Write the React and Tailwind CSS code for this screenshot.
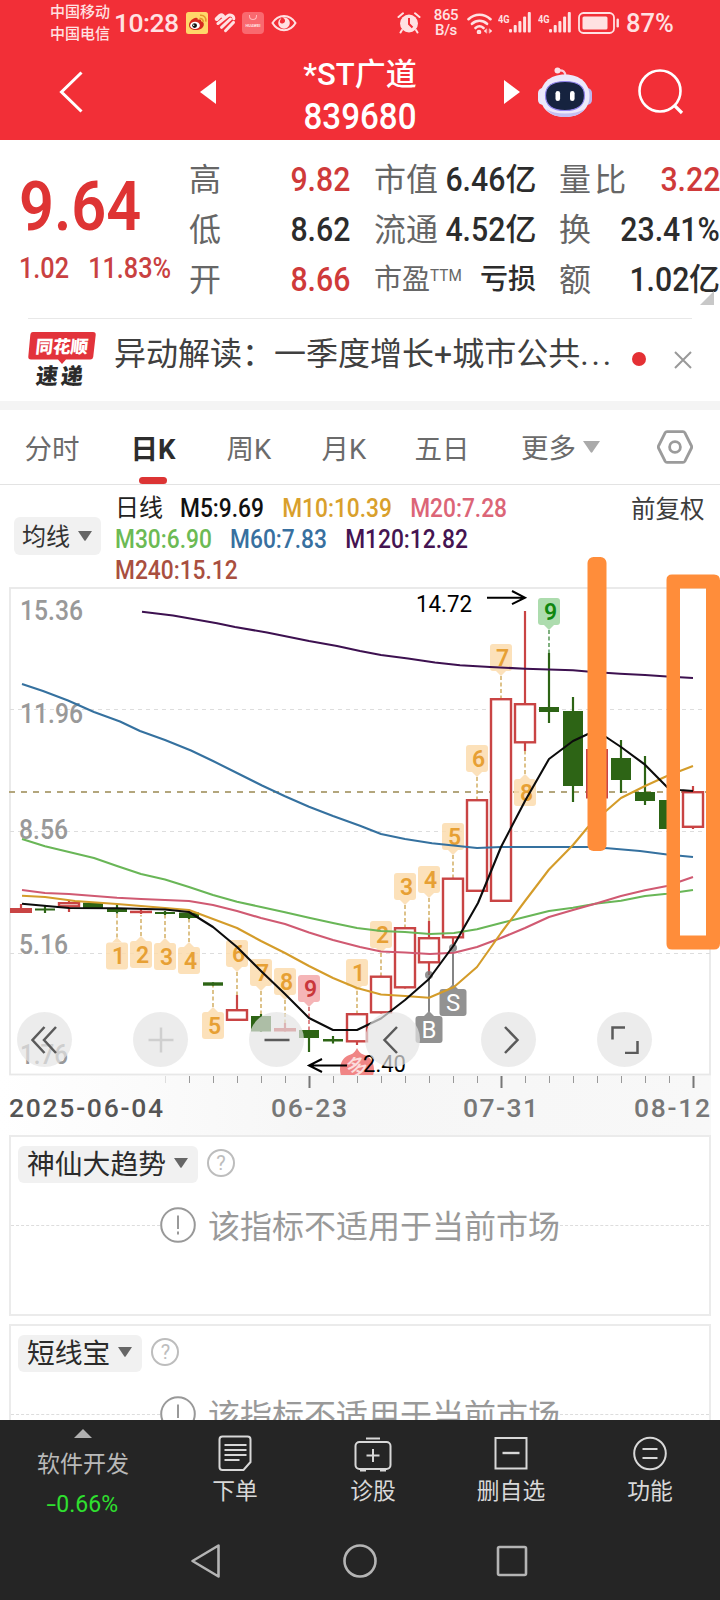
import clsx from "clsx";

const START_X = 21;
const STEP = 24;
const cx = (i) => START_X + STEP * i;

// index, kind (up / down / solid), body top, body bottom, wick top, wick bottom
const candles = [
  [0, "solid", 908, 913, 904, 913],
  [1, "down", 908.5, 910.5, 906, 913],
  [2, "up", 902, 907.5, 901, 912],
  [3, "down", 902.7, 908, 902.7, 908],
  [4, "down", 908, 912, 905, 913.5],
  [5, "solid", 910.7, 913.2, 909, 914],
  [6, "down", 912, 914, 911, 915],
  [7, "down", 912.5, 918, 912.5, 919],
  [8, "down", 982.3, 985.7, 982.3, 985.7],
  [9, "up", 1009, 1021, 995, 1021],
  [10, "down", 1016, 1031.5, 1014, 1032],
  [11, "solid", 1028, 1031.5, 1023, 1031.5],
  [12, "down", 1030, 1038, 1030, 1052],
  [13, "down", 1039, 1041.5, 1036, 1043.5],
  [14, "up", 1013, 1042.5, 1013, 1045],
  [15, "up", 975.5, 1013.5, 975.5, 1013.5],
  [16, "up", 927, 988.5, 927, 988.5],
  [17, "up", 937, 963.5, 921, 975],
  [18, "up", 877.5, 938.5, 877.5, 946],
  [19, "up", 799, 892, 799, 892],
  [20, "up", 698, 902, 698, 902],
  [21, "up", 703, 743.5, 611, 751],
  [22, "down", 707, 712, 653, 723],
  [23, "down", 711, 786, 697, 802],
  [24, "solid", 749, 798.5, 749, 798.5],
  [25, "down", 758, 780, 740, 793],
  [26, "down", 792, 801, 756, 805],
  [27, "down", 800, 829, 800, 829],
  [28, "up", 791, 828, 786, 829],
];

const averages = [
  {
    color: "#3d1150",
    points:
      "142,611.7 173,615.5 217,623.3 235,627 267,632.5 309,641 337,646 360,651 381,655 408,658.5 435,662.5 460,665.3 490,667 525,668.7 573,670.3 590,671.7 620,673.7 645,675 667,676.5 693,678",
  },
  {
    color: "#35719f",
    points:
      "22,684 43,691 68,700.5 94,712 120,721.5 140,731 165,740 191,750.5 213,761 237,773 262,785.5 285,796.3 309,806.7 333,816 360,825.7 381,834 405,839 432,843.3 477,848 501,847 588,847 608,848.3 640,851 667,854.5 693,857",
  },
  {
    color: "#69b657",
    points:
      "22,839 45,846.3 69,852 94,858 117,866 141,874 165,879.5 189,887 213,895 237,901.7 261,907 285,912.3 309,917.7 333,923 357,928 381,931 405,932 430,934 454,933 477,929.3 501,923 525,917 549,911 573,907.7 597,903.5 621,900.7 645,896 667,893.7 693,890",
  },
  {
    color: "#d05a72",
    points:
      "22,890 45,893 69,894 117,897.7 141,899 189,901 213,905 237,911 261,918 285,924 309,932.5 333,940 360,947 381,951.5 405,952.5 430,954 454,952.7 477,947 501,938 525,928 549,917 573,910 597,903.3 621,896 645,890.3 667,886 693,877",
  },
  {
    color: "#d49c2a",
    points:
      "22,895.7 45,897 75,901 117,904 165,908 189,910 213,919 237,928 261,941 285,953 309,966 333,978 357,988 381,994.5 405,996 429,997.7 454,987 477,967 501,933 525,901 549,869.5 573,845 588,827 606,811 621,798 645,786 667,776 693,766",
  },
  {
    color: "#0c0c0c",
    points:
      "22,903.7 69,908 117,908.3 165,909.5 189,912 213,927 237,947 261,971 285,994 309,1018 333,1030 357,1030 381,1018.5 405,1000 429,979 454,945 478,903 501,847 525,801 549,759 573,741 588,734 606,737 621,747 645,764.7 667,787 680,790 693,791",
  },
];

// badges sitting above a candle point down, the ones below point up
const badges = [
  { i: 4, n: 1, top: 942.5, below: true, to: 914 },
  { i: 5, n: 2, top: 941, below: true, to: 915 },
  { i: 6, n: 3, top: 943, below: true, to: 915 },
  { i: 7, n: 4, top: 947, below: true, to: 919 },
  { i: 8, n: 5, top: 1012, below: true, to: 986 },
  { i: 9, n: 6, top: 940, to: 995 },
  { i: 10, n: 7, top: 959, to: 1014 },
  { i: 11, n: 8, top: 968, to: 1023 },
  { i: 12, n: 9, top: 975, to: 1030, tone: "red" },
  { i: 14, n: 1, top: 959, to: 1013 },
  { i: 15, n: 2, top: 921, to: 975 },
  { i: 16, n: 3, top: 873, to: 927 },
  { i: 17, n: 4, top: 866, to: 921 },
  { i: 18, n: 5, top: 823, to: 877 },
  { i: 19, n: 6, top: 745, to: 799 },
  { i: 20, n: 7, top: 644, to: 698 },
  { i: 21, n: 8, top: 779, below: true, to: 751 },
  { i: 22, n: 9, top: 598, to: 653, tone: "green" },
];

const tones = {
  gold: { box: "#fcdcae", text: "#e7a034", line: "#c79a3c" },
  red: { box: "#f4a9ab", text: "#c9373b", line: "#c9373b" },
  green: { box: "#9fd6a0", text: "#0f870f", line: "#2b7d2b" },
};

const tabs = [
  { label: "分时", cls: "w-[54px]" },
  { label: "日K", cls: "w-[46px] ml-[51px]", active: true },
  { label: "周K", cls: "w-[46px] ml-[50px]" },
  { label: "月K", cls: "w-[46px] ml-[49px]" },
  { label: "五日", cls: "w-[54px] ml-[48px]" },
];

function Caret({ className }) {
  return (
    <svg viewBox="0 0 14 10" className={className}>
      <path d="M0 0h14L7.8 9.2q-.8 1-1.6 0z" fill="currentColor" />
    </svg>
  );
}

function Signal() {
  return (
    <div className="flex w-[33px] items-start">
      <span className="mt-px w-[11px] origin-left scale-x-[0.8] text-[11.5px] leading-3 font-bold">
        4G
      </span>
      <svg viewBox="0 0 22 22" className="h-[22px] w-[22px]" fill="currentColor">
        <rect x="0" y="17" width="3" height="3.5" rx="1" />
        <rect x="4.7" y="13" width="3" height="7.5" rx="1" />
        <rect x="9.4" y="9" width="3" height="11.5" rx="1" />
        <rect x="14.1" y="4.5" width="3" height="16" rx="1" />
        <rect x="18.8" y="0" width="3" height="20.5" rx="1" />
      </svg>
    </div>
  );
}

function StatusBar() {
  return (
    <div className="flex h-[46px] items-center text-[#ffe1e2]">
      <div className="ml-[50px] w-[60px] text-[15px] leading-[22px] font-medium">
        <div>中国移动</div>
        <div>中国电信</div>
      </div>
      <div className="ml-1 w-[68px] text-[26.5px] leading-none font-medium tracking-[-0.02em]">
        10:28
      </div>
      <svg viewBox="0 0 22 22" className="ml-1 h-[22px] w-[22px]">
        <rect width="22" height="22" rx="2.5" fill="#ffd76a" />
        <path
          d="M3 13c0-3.500 4-7 7-7.200 1.500-.1 2 .8 1.700 2 2-.8 3.800-.5 3.400 1.500 1.800.5 3 1.800 2.700 3.600-.4 3-4 5.100-8 5.100S3 16.500 3 13z"
          fill="#d6281f"
        />
        <ellipse cx="9" cy="13.400" rx="4.800" ry="3.600" fill="#fff" />
        <circle cx="8.600" cy="13.600" r="2.400" fill="#111" />
        <circle cx="7.700" cy="13.200" r=".7" fill="#fff" />
        <path
          d="M13.500 6.500c2.500-.3 4 1.400 3.600 3.600M14 3.300c4-.5 6.500 2.500 5.800 6.300"
          fill="none"
          stroke="#e6962c"
          strokeWidth="1.500"
        />
      </svg>
      <svg
        viewBox="0 0 22 20"
        className="ml-[6px] h-[20px] w-[22px]"
        fill="none"
        stroke="currentColor"
        strokeWidth="3"
        strokeLinecap="round"
      >
        <path d="M2.800 6 6 2.800q1.500-1 3 .4" strokeWidth="4" />
        <path d="M4 10.500 13.500 3c2.600-2 6.300-.4 6.300 2.800" />
        <path d="m7.500 14.300 9-8.300" />
        <path d="m11.500 17.700 8-8.300" />
      </svg>
      <div className="ml-[6px] flex h-[22px] w-[22px] flex-col items-center justify-between rounded bg-[#f9696f] pt-[3px] pb-[6px]">
        <span className="h-[5px] w-[8px] rounded-b-full border border-t-0 border-[#ffb9bb]" />
        <span className="text-[4px] leading-none font-bold">HUAWEI</span>
      </div>
      <svg viewBox="0 0 26 18" className="ml-[7px] h-[18px] w-[26px]">
        <path
          d="M1.500 9C7 -.5 19 -.5 24.500 9 19 18.500 7 18.500 1.500 9z"
          fill="none"
          stroke="currentColor"
          strokeWidth="2"
        />
        <circle cx="13" cy="9" r="5.800" fill="currentColor" />
        <path d="M10.500 3.500c4 .5 5 5 1 6-2 .4-2.800-1-2.600-2.500z" fill="#f22f37" />
      </svg>

      <svg viewBox="0 0 24 22" className="ml-[100px] h-[22px] w-[24px]">
        <circle cx="12" cy="11.500" r="9" fill="currentColor" />
        <path
          d="M1.500 5 6 1.300M22.500 5 18 1.300M5 18l-1.500 2.500M19 18l1.500 2.500"
          stroke="currentColor"
          strokeWidth="2"
          strokeLinecap="round"
        />
        <path d="M12 6v6l3.500 3.500" fill="none" stroke="#f22f37" strokeWidth="2" />
      </svg>
      <div className="ml-[11px] w-[28px] text-center text-[15px] leading-[15px] font-medium tracking-tight">
        <div>865</div>
        <div>B/s</div>
      </div>
      <svg
        viewBox="0 0 26 21"
        className="ml-[7px] h-[21px] w-[26px]"
        fill="none"
        stroke="currentColor"
        strokeWidth="2.600"
        strokeLinecap="round"
      >
        <path d="M1.500 6.200c6.500-6 15.500-6 22 0M5 10.800c4.500-4 10.500-4 15 0M8.500 15c2.500-2.200 5.500-2.200 8 0" />
        <circle cx="12" cy="19" r="1" />
        <path d="m19.500 16-2.500 2 2.500 2zM22.500 16l2.500 2-2.500 2z" fill="currentColor" strokeWidth=".5" />
      </svg>
      <div className="ml-[5px] flex gap-[7px]">
        <Signal />
        <Signal />
      </div>
      <svg viewBox="0 0 42 22" className="ml-[7px] h-[22px] w-[42px]">
        <rect x="1" y="1" width="35" height="20" rx="4.500" fill="none" stroke="currentColor" strokeWidth="1.800" />
        <rect x="4.500" y="4.500" width="25" height="13" rx="1.500" fill="currentColor" />
        <rect x="38.500" y="6.500" width="2.400" height="9" rx="1.200" fill="currentColor" />
      </svg>
      <div className="ml-[6px] pt-[2px] text-[25.5px] leading-none font-medium">
        87%
      </div>
    </div>
  );
}

function Robot() {
  return (
    <svg viewBox="0 0 54 50" className="ml-[18px] h-[50px] w-[54px]">
      <path d="M20 3.500c5-.8 7.500 1 7.500 6" fill="none" stroke="#f9cfdc" strokeWidth="2.200" />
      <circle cx="19.500" cy="3.500" r="3" fill="#fbe0e8" />
      <rect x="0" y="21" width="10" height="17" rx="5" fill="#e9e6fb" />
      <rect x="44" y="21" width="10" height="17" rx="5" fill="#bdb6ee" />
      <path d="M27 7.500C43 7.500 51.500 17 51.500 29S43 50 27 50 2.500 41 2.500 29 11 7.500 27 7.500z" fill="#ece9fb" />
      <path d="M8 42c5 6 11 8 19 8s15-2 20-8c-6 3-12 4.500-20 4.500S13 45 8 42z" fill="#c4bff3" />
      <path
        d="M27 14.500c12 0 19.500 4 19.500 14S39 43.500 27 43.500 7.500 39 7.500 28.500s7.500-14 19.500-14z"
        fill="#16233f"
        stroke="#9184ee"
        strokeWidth="1.200"
      />
      <rect x="17.500" y="24" width="4.600" height="10" rx="2.300" fill="#fff" />
      <rect x="32" y="24" width="4.600" height="10" rx="2.300" fill="#fff" />
    </svg>
  );
}

function Header() {
  return (
    <div className="h-[140px] bg-[#f22f37] text-white">
      <StatusBar />
      <div className="flex h-[92px] items-center">
        <svg viewBox="0 0 24 42" className="ml-[59px] h-[42px] w-[24px]">
          <path d="M22.500 1.500 2.500 21l20 19.500" fill="none" stroke="currentColor" strokeWidth="3" />
        </svg>
        <svg viewBox="0 0 16 24" className="ml-[117px] h-[24px] w-[16px]">
          <path d="M16 0v24L0 12z" fill="currentColor" />
        </svg>
        <div className="w-[288px] text-center font-medium">
          <div className="mt-[9px] text-[31px] leading-[38px]">*ST广道</div>
          <div className="mt-[2px] scale-x-[0.92] text-[36px] leading-[42px]">839680</div>
        </div>
        <svg viewBox="0 0 16 24" className="h-[24px] w-[16px]">
          <path d="M0 0v24l16-12z" fill="currentColor" />
        </svg>
        <Robot />
        <svg
          viewBox="0 0 46 46"
          className="ml-[46px] h-[46px] w-[46px]"
          fill="none"
          stroke="currentColor"
          strokeWidth="2.600"
        >
          <circle cx="22" cy="22" r="20.500" />
          <path d="m36 36 8 8" strokeWidth="3.200" />
        </svg>
      </div>
    </div>
  );
}

function Stat({ label, value, red, small, sup, spaced }) {
  return (
    <div className="flex h-[50px] items-center justify-between whitespace-nowrap">
      <span
        className={clsx(
          "flex items-start pt-[2px] text-[#666]",
          small ? "text-[28px]" : "text-[32px]",
          spaced && "tracking-[0.1em]"
        )}
      >
        {label}
        {sup && (
          <sup className="top-0 mt-[8px] w-[28px] origin-left scale-x-[0.9] text-[17px] leading-none">
            {sup}
          </sup>
        )}
      </span>
      <span
        className={clsx(
          "flex items-center font-medium",
          red ? "text-[#cf3a3a]" : "text-[#2c2c2c]"
        )}
      >
        {value.map((part) => (
          <span
            key={part}
            className={clsx(
              /\d/.test(part)
                ? "origin-right scale-x-[0.89] pt-[1px] text-[34px]"
                : small
                  ? "pt-[2px] text-[28px]"
                  : "pt-[2px] text-[31px]"
            )}
          >
            {part}
          </span>
        ))}
      </span>
    </div>
  );
}

function Quote() {
  return (
    <div className="relative flex h-[178px] pt-[14px]">
      <div className="w-[169px] pl-[19px] text-[#de3434]">
        <div className="mt-[13px] origin-left scale-x-[0.9] text-[68px] leading-[80px] font-semibold">
          9.64
        </div>
        <div className="mt-[1px] flex origin-left scale-x-[0.87] gap-[22px] text-[29px] leading-[40px] font-medium text-[#c94141]">
          <span>1.02</span>
          <span>11.83%</span>
        </div>
      </div>
      <div className="ml-[20px] w-[161px]">
        <Stat label="高" value={["9.82"]} red />
        <Stat label="低" value={["8.62"]} />
        <Stat label="开" value={["8.66"]} red />
      </div>
      <div className="ml-[24px] w-[162px]">
        <Stat label="市值" value={["6.46", "亿"]} />
        <Stat label="流通" value={["4.52", "亿"]} />
        <Stat label="市盈" sup="TTM" value={["亏损"]} small />
      </div>
      <div className="ml-[23px] w-[161px]">
        <Stat label="量比" value={["3.22"]} red spaced />
        <Stat label="换" value={["23.41%"]} />
        <Stat label="额" value={["1.02", "亿"]} />
      </div>
      <svg viewBox="0 0 14 14" className="absolute right-[6px] bottom-[13px] h-[14px] w-[14px]">
        <path d="M14 0v14H0z" fill="#c8c8c8" />
      </svg>
    </div>
  );
}

function News() {
  return (
    <div className="mx-[28px] flex h-[83px] border-t border-[#e8e8e8]">
      <div className="relative mt-[13px] h-[56px] w-[68px]">
        <svg viewBox="0 0 68 32" className="absolute top-0 left-0 h-[32px] w-[68px]">
          <path d="M5 0h60q3 0 2.700 3l-2.500 22q-.4 2.500-3 2.500H38L34 32l-4-4.500H3q-3 0-2.700-3l2-21.500Q2.600 0 5 0z" fill="#e2333b" />
        </svg>
        <div className="relative -skew-x-6 pt-[4px] text-center text-[17.500px] leading-[22px] font-black text-white">
          同花顺
        </div>
        <div className="relative mt-[6px] -skew-x-6 pl-[8px] text-[22px] leading-[26px] font-black tracking-[0.14em] text-[#2b2b2b]">
          速递
        </div>
      </div>
      <div className="ml-[18px] flex w-[501px] pt-[2px] text-[32px] leading-[66px] whitespace-nowrap text-[#404040]">
        <span>异动解读：一季度增长+城市公共</span>
        <span className="tracking-[0.09em]">...</span>
      </div>
      <span className="mt-[33px] ml-[17px] h-[14px] w-[14px] rounded-full bg-[#e43034]" />
      <svg viewBox="0 0 18 18" className="mt-[32px] ml-[28px] h-[18px] w-[18px]">
        <path d="m1 1 16 16M17 1 1 17" stroke="#999" strokeWidth="2" />
      </svg>
    </div>
  );
}

function Tabs() {
  return (
    <div className="flex h-[75px] items-stretch border-b border-[#e3e3e3] pl-[25px] text-[27.500px] whitespace-nowrap text-[#6b6b6b]">
      {tabs.map((tab) => (
        <div
          key={tab.label}
          className={clsx(
            "flex flex-col items-center justify-between leading-[79px]",
            tab.cls,
            tab.active && "font-bold text-[#2d2d2d]"
          )}
        >
          <span className="h-[67px]">{tab.label}</span>
          {tab.active && <span className="h-[7px] w-[28px] rounded-full bg-[#dc3434]" />}
        </div>
      ))}
      <div className="ml-[52px] flex w-[79px] items-center justify-between">
        <span className="pt-[4px] leading-[72px]">更多</span>
        <Caret className="mt-[-1px] h-[14px] w-[17px] text-[#aaa]" />
      </div>
      <svg
        viewBox="0 0 36 34"
        className="mt-[20px] ml-[57px] h-[34px] w-[36px]"
        fill="none"
        stroke="#9b9b9b"
        strokeWidth="2.800"
        strokeLinejoin="round"
      >
        <path d="M10 1.600h16q1.200 0 1.800 1L34.500 16q.4 1 0 2l-6.700 13.400q-.6 1-1.800 1H10q-1.200 0-1.800-1L1.500 18q-.4-1 0-2L8.200 2.600q.6-1 1.800-1z" />
        <circle cx="18" cy="17" r="5.400" />
      </svg>
    </div>
  );
}

function Legend() {
  return (
    <div className="flex h-[102px] text-[24px] leading-[31px] whitespace-nowrap">
      <div className="mt-[32px] ml-[14px] flex h-[38px] w-[87px] items-center justify-between rounded-md bg-[#f1f1f1] pr-[9px] pl-[8px] text-[#333]">
        <span className="pt-[2px]">均线</span>
        <Caret className="h-[10px] w-[14px] text-[#666]" />
      </div>
      <div className="ml-[14px] w-[516px] pt-[8px] font-medium">
        <div className="flex">
          <span className="w-[65px] font-normal text-[#222]">日线</span>
          <div className="flex origin-left scale-x-[0.91] gap-[20px] text-[25px]">
            <span className="text-[#111]">M5:9.69</span>
            <span className="text-[#d9a02c]">M10:10.39</span>
            <span className="text-[#dc6577]">M20:7.28</span>
          </div>
        </div>
        <div className="flex origin-left scale-x-[0.91] gap-[20px] text-[25px]">
          <span className="text-[#6cba54]">M30:6.90</span>
          <span className="text-[#38709f]">M60:7.83</span>
          <span className="text-[#451452]">M120:12.82</span>
        </div>
        <div className="origin-left scale-x-[0.91] text-[25px] text-[#a94f3f]">M240:15.12</div>
      </div>
      <div className="pt-[9px] text-[24.500px] text-[#3d3d3d]">前复权</div>
    </div>
  );
}

function Candle({ data }) {
  const [i, kind, top, bottom, high, low] = data;
  const x = cx(i);
  const color = kind === "down" ? "#2d6415" : "#c94444";
  return (
    <g>
      <line x1={x} x2={x} y1={high} y2={low} stroke={color} strokeWidth="2.2" />
      {kind === "up" ? (
        <rect
          x={x - 10}
          y={top + 1.2}
          width="20"
          height={Math.max(bottom - top - 2.4, 1)}
          fill="#fff"
          stroke={color}
          strokeWidth="2.4"
        />
      ) : (
        <rect
          x={kind === "down" ? x - 10 : x - 11}
          y={top}
          width={kind === "down" ? 20 : 22}
          height={bottom - top}
          fill={color}
        />
      )}
    </g>
  );
}

function Badge({ i, n, top, below, to, tone = "gold" }) {
  const x = cx(i);
  const c = tones[tone];
  const edge = below ? top : top + 27;
  const tip = below ? top - 5 : top + 32;
  return (
    <g>
      <line x1={x} x2={x} y1={tip} y2={to} stroke={c.line} strokeWidth="1.2" strokeDasharray="4 2.5" />
      <g fill={c.box} opacity="0.85">
        <rect x={x - 11} y={top} width="22" height="27" rx="3" />
        <path d={`M${x - 5} ${edge}h10L${x} ${tip}z`} />
      </g>
      <text x={x + 1.5} y={top + 21.5} textAnchor="middle" fontSize="23" fontWeight="600" fill={c.text}>
        {n}
      </text>
    </g>
  );
}

function TradeMark({ x, top, dot, label }) {
  return (
    <g>
      <circle cx={x} cy={dot} r="4" fill="#777" opacity="0.8" />
      <line x1={x} x2={x} y1={dot + 4} y2={top - 4} stroke="#666" strokeWidth="1.6" />
      <path d={`M${x - 5} ${top}h10l-5-5z`} fill="#929292" />
      <rect x={x - 13.500} y={top} width="27" height="27" rx="3" fill="#929292" />
      <text x={x} y={top + 22} textAnchor="middle" fontSize="24" fill="#fff">
        {label}
      </text>
    </g>
  );
}

function RoundButton({ children, muted }) {
  return (
    <button
      className={clsx(
        "flex h-[55px] w-[55px] items-center justify-center rounded-full bg-[#e4e4e4]/70",
        muted ? "text-[#cfcfcf]" : "text-[#5a5a5a]"
      )}
    >
      <svg viewBox="0 0 28 28" className="h-[28px] w-[28px]" fill="none" stroke="currentColor" strokeWidth="2.500">
        {children}
      </svg>
    </button>
  );
}

function Chart() {
  const prices = [
    ["15.36", 20, 620, 63],
    ["11.96", 20, 723, 63],
    ["8.56", 19, 839, 49],
    ["5.16", 19, 954, 49],
    ["1.76", 20, 1064, 48],
  ];
  const dates = [
    ["2025-06-04", 9, 154, "#555"],
    ["06-23", 271, 76, "#777"],
    ["07-31", 463, 75, "#777"],
    ["08-12", 634, 76, "#777"],
  ];
  return (
    <div className="relative h-[548px]">
      <svg viewBox="0 587 720 548" className="block h-[548px] w-[720px]">
        <defs>
          <linearGradient id="axis-x" x1="0" x2="1" y1="0" y2="0">
            <stop offset="0" stopColor="#fff" />
            <stop offset="0.45" stopColor="#f6f6f6" />
            <stop offset="1" stopColor="#f8f8f8" />
          </linearGradient>
          <clipPath id="plot">
            <rect x="9" y="587" width="703" height="488" />
          </clipPath>
        </defs>
        <rect x="0" y="1075" width="711" height="60" fill="url(#axis-x)" />
        <rect x="10" y="588" width="700" height="486.500" fill="#fff" stroke="#e8e8e8" strokeWidth="1.800" />
        {[709.5, 831.5, 953.5].map((y) => (
          <line key={y} x1="10" x2="710" y1={y} y2={y} stroke="#ddd" strokeWidth="1" strokeDasharray="4 4" />
        ))}
        <line x1="9" x2="710" y1="792" y2="792" stroke="#b3a67c" strokeWidth="1.800" strokeDasharray="6 6" />
        {prices.map(([text, x, y, w]) => (
          <text key={text} x={x} y={y} textLength={w} lengthAdjust="spacingAndGlyphs" fontSize="27.500" fontWeight="500" fill="#999">
            {text}
          </text>
        ))}
        {candles.map((c) => (
          <Candle key={c[0]} data={c} />
        ))}
        {badges.map((b) => (
          <Badge key={b.i} {...b} />
        ))}
        <TradeMark x={429} top={1016} dot={975} label="B" />
        <TradeMark x={453} top={989} dot={948} label="S" />
        <g clipPath="url(#plot)">
          <path d="M357 1048c3 6 5 6 9 7.500 5 2 8 8 8 14s-3 12-8 14h-18c-5-2-8-8-8-14s3-12 8-14c4-1.500 6-1.500 9-7.500z" fill="#f08585" />
          <text x="357" y="1075" fontSize="22" fontWeight="500" fill="#fbdcdc" textAnchor="middle" transform="rotate(-12 357 1068)">
            多
          </text>
        </g>
        {averages.map((line) => (
          <polyline key={line.color} points={line.points} fill="none" stroke={line.color} strokeWidth="2.100" strokeLinejoin="round" />
        ))}
        <g fill="none" stroke="#000" strokeWidth="2">
          <path d="M487 597.700h37M512 591l13 6.700-13 6.500" />
          <path d="M347 1065.500h-37M322 1059l-13 6.500 13 6.500" />
        </g>
        <text x="416" y="611.500" textLength="56" lengthAdjust="spacingAndGlyphs" fontSize="24" fill="#000">
          14.72
        </text>
        <text x="363" y="1071.500" textLength="43" lengthAdjust="spacingAndGlyphs" fontSize="24" fill="#000">
          2.40
        </text>
        {Array.from({ length: 23 }, (_, k) => k + 6).map((i) => {
          const major = i === 12 || i === 20 || i === 28;
          return (
            <line
              key={i}
              x1={cx(i) + 0.5}
              x2={cx(i) + 0.5}
              y1="1076"
              y2={major ? 1088 : 1083}
              stroke={major ? "#777" : i === 6 ? "#ddd" : "#999"}
              strokeWidth={major ? 2 : 1}
            />
          );
        })}
        {dates.map(([text, x, w, fill]) => (
          <text key={text} x={x} y="1117" textLength={w} fontSize="26.500" fontWeight="500" fill={fill}>
            {text}
          </text>
        ))}
      </svg>

      <div className="absolute top-[425px] left-[17px] flex gap-[61px]">
        <RoundButton>
          <path d="M13.500 1 1.500 14l12 13M25 1 13 14l12 13" />
        </RoundButton>
        <RoundButton muted>
          <path d="M14 1.500v25M1.500 14h25" />
        </RoundButton>
        <RoundButton>
          <path d="M1.500 14h25" />
        </RoundButton>
        <RoundButton>
          <path d="M18 1 5.500 14 18 27" />
        </RoundButton>
        <RoundButton>
          <path d="m10 1 12.500 13L10 27" />
        </RoundButton>
        <RoundButton>
          <path d="M1.500 13.500v-12h12.500M26.500 15v12H14" />
        </RoundButton>
      </div>

      {/* marker strokes */}
      <svg viewBox="0 540 720 420" className="pointer-events-none absolute -top-[47px] left-0 h-[420px] w-[720px]">
        <rect x="587.500" y="557" width="19" height="294" rx="6" fill="#ff8d3a" />
        <path
          fillRule="evenodd"
          fill="#ff8d3a"
          d="M672 574.500h42q6 0 6 6v363q0 6-6 6h-42q-5.500 0-5.500-5.500v-364q0-5.500 5.500-5.500zM680 588.500v347h26v-347z"
        />
      </svg>
    </div>
  );
}

function Indicator({ name }) {
  return (
    <div className="mx-[9px] h-[181px] shrink-0 border-2 border-[#ebebeb]">
      <div className="flex h-[54px] items-center pl-[7px]">
        <div className="flex h-[37px] items-center gap-[8px] rounded-md bg-[#f1f1f1] pr-[10px] pl-[9px] text-[27.800px] leading-none text-[#2b2b2b]">
          <span className="pt-[2px]">{name}</span>
          <Caret className="-mt-[2px] h-[10px] w-[14px] text-[#666]" />
        </div>
        <div className="-mt-[3px] ml-[9px] flex h-[28px] w-[28px] items-center justify-center rounded-full border-2 border-[#bdbdbd] text-[20px] leading-none text-[#bdbdbd]">
          ?
        </div>
      </div>
      <div className="flex items-center">
        <span className="w-[149px] border-t border-dashed border-[#ddd]" />
        <svg viewBox="0 0 36 36" className="h-[36px] w-[36px]" fill="none" stroke="#999" strokeWidth="2">
          <circle cx="18" cy="18" r="16.800" />
          <path d="M18 8.500v13.500M18 24.500v3" />
        </svg>
        <span className="relative top-[2px] pl-[12px] text-[32px] leading-[68px] whitespace-nowrap text-[#999]">
          该指标不适用于当前市场
        </span>
        <span className="flex-1 border-t border-dashed border-[#ddd]" />
      </div>
    </div>
  );
}

function Action({ label, children, className }) {
  return (
    <div className={clsx("flex flex-col items-center pt-[14px] text-[22.800px]", className)}>
      <svg viewBox="0 0 38 38" className="h-[38px] w-[38px]" fill="none" stroke="#d8d8d8" strokeWidth="2">
        {children}
      </svg>
      <span className="mt-[3px] leading-[34px] text-[#d8d8d8]">{label}</span>
    </div>
  );
}

function BottomBar() {
  return (
    <div className="h-[180px] bg-[#252525]">
      <div className="flex h-[110px]">
        <div className="flex w-[166px] flex-col items-center pt-[9px]">
          <svg viewBox="0 0 18 9" className="h-[9px] w-[18px]">
            <path d="M9 0l9 9H0z" fill="#b0b0b0" />
          </svg>
          <div className="mt-[10px] text-[23px] leading-[34px] text-[#b9b9b9]">软件开发</div>
          <div className="mt-[6px] text-[23px] leading-[34px] text-[#2fe02f]">
            <span className="mr-[2px] inline-block scale-x-150">-</span>0.66%
          </div>
        </div>
        <Action label="下单" className="w-[138px]">
          <path d="M6.500 2.500h25q3 0 3 3V28l-7 8h-21q-3 0-3-3V5.500q0-3 3-3zM8.500 11h22M8.500 16h22M8.500 21h22M8.500 26h15" />
        </Action>
        <Action label="诊股" className="w-[138px]">
          <rect x="1.500" y="8" width="35" height="27" rx="4" />
          <path d="M12 4.500h14M19 15v13M12.500 21.500h13M6 36.500h6M26 36.500h6" />
        </Action>
        <Action label="删自选" className="w-[138px]">
          <rect x="3.500" y="4" width="31" height="30.500" />
          <path d="M10.500 19h17" strokeWidth="2.400" />
        </Action>
        <Action label="功能" className="w-[140px]">
          <circle cx="19" cy="19.500" r="15.800" />
          <path d="M11.500 15h15M11.500 24h15" />
        </Action>
      </div>
      <div className="flex justify-center pt-[13px] text-[#b4b4b4]">
        <svg viewBox="0 0 36 36" className="h-[36px] w-[36px]" fill="none" stroke="currentColor" strokeWidth="2.600" strokeLinejoin="round">
          <path d="M28.500 2.500v31L2.500 18z" />
        </svg>
        <svg viewBox="0 0 36 36" className="mx-[116px] h-[36px] w-[36px]" fill="none" stroke="currentColor" strokeWidth="2.600">
          <circle cx="18" cy="18" r="15.500" />
        </svg>
        <svg viewBox="0 0 36 36" className="h-[36px] w-[36px]" fill="none" stroke="currentColor" strokeWidth="2.600">
          <rect x="4" y="4" width="28" height="28" rx="1.500" />
        </svg>
      </div>
    </div>
  );
}

function App() {
  return (
    <div className="flex h-[1600px] w-[720px] flex-col overflow-hidden bg-white font-[Roboto,'Noto_Sans_CJK_SC',sans-serif]">
      <Header />
      <Quote />
      <News />
      <div className="h-[9px] shrink-0 bg-[#f4f4f4]" />
      <Tabs />
      <Legend />
      <Chart />
      <div className="flex h-[285px] flex-col gap-[8px] overflow-hidden">
        <Indicator name="神仙大趋势" />
        <Indicator name="短线宝" />
      </div>
      <BottomBar />
    </div>
  );
}

export default App;
